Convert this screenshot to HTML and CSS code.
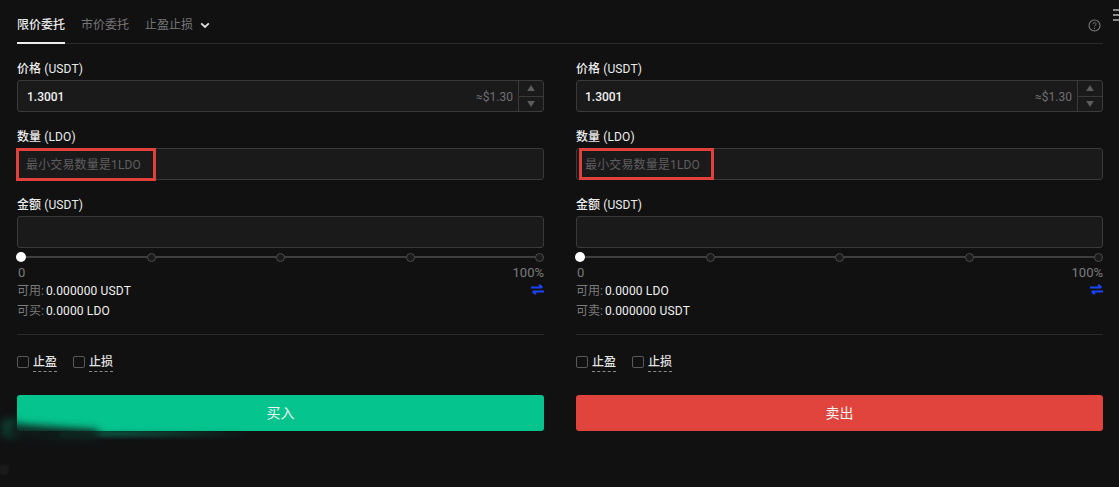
FILE: index.html
```html
<!DOCTYPE html>
<html lang="zh">
<head>
<meta charset="utf-8">
<title>限价委托</title>
<link rel="stylesheet" href="styles.css">
</head>
<body>
<main class="panel">
  <nav class="tabs">
    <span class="tab active">限价委托</span>
    <span class="tab">市价委托</span>
    <span class="tab dropdown">止盈止损
      <svg class="chev" width="10" height="7" viewBox="0 0 10 7"><path d="M1.200 1.400 5 5l3.800-3.600" fill="none" stroke="#e0e0e0" stroke-width="1.800"/></svg>
    </span>
    <svg class="help" width="13" height="13" viewBox="0 0 13 13"><circle cx="6.500" cy="6.500" r="5.500" fill="none" stroke="#7a7a7a" stroke-width="1.100"/><path d="M4.900 5.200c0-2.100 3.200-2.100 3.200-.1 0 1.200-1.600 1.200-1.600 2.500" fill="none" stroke="#7a7a7a" stroke-width="1"/><circle cx="6.500" cy="9.400" r=".7" fill="#7a7a7a"/></svg>
  </nav>
  <div class="menu-mark"><i></i><i></i><i></i></div>
  <div class="columns">
    <form class="col">
      <label class="lbl"><b>价格</b> (USDT)</label>
      <div class="field price">
        <span class="val">1.3001</span>
        <span class="approx">≈$1.30</span>
        <div class="stepper">
          <span class="step"><svg width="8" height="6" viewBox="0 0 9 7"><path d="M4.500 0 9 7H0z" fill="#5c5c5c"/></svg></span>
          <span class="step"><svg width="8" height="6" viewBox="0 0 9 7"><path d="M4.500 7 9 0H0z" fill="#5c5c5c"/></svg></span>
        </div>
      </div>
      <label class="lbl"><b>数量</b> (LDO)</label>
      <div class="field"><span class="ph">最小交易数量是1LDO</span><span class="mark mark-l"></span></div>
      <label class="lbl"><b>金额</b> (USDT)</label>
      <div class="field"></div>
      <div class="slider"><b class="knob"></b><b class="dot"></b><b class="dot"></b><b class="dot"></b><b class="dot"></b></div>
      <div class="range"><span>0</span><span>100%</span></div>
      <div class="info"><span><em>可用:</em>0.000000 USDT</span>
        <svg class="swap" width="13" height="11" viewBox="0 0 13 11"><path d="M0 3.500h11M8 .8l3.500 2.700M13 7.500H2M5 10.200 1.500 7.500" fill="none" stroke="#1a44ff" stroke-width="1.800"/></svg>
      </div>
      <div class="info second"><span><em>可买:</em>0.0000 LDO</span></div>
      <hr class="rule">
      <div class="checks">
        <span class="check"><i class="box"></i><u>止盈</u></span>
        <span class="check"><i class="box"></i><u>止损</u></span>
      </div>
      <button type="button" class="btn buy">买入</button>
    </form>
    <form class="col">
      <label class="lbl"><b>价格</b> (USDT)</label>
      <div class="field price">
        <span class="val">1.3001</span>
        <span class="approx">≈$1.30</span>
        <div class="stepper">
          <span class="step"><svg width="8" height="6" viewBox="0 0 9 7"><path d="M4.500 0 9 7H0z" fill="#5c5c5c"/></svg></span>
          <span class="step"><svg width="8" height="6" viewBox="0 0 9 7"><path d="M4.500 7 9 0H0z" fill="#5c5c5c"/></svg></span>
        </div>
      </div>
      <label class="lbl"><b>数量</b> (LDO)</label>
      <div class="field"><span class="ph">最小交易数量是1LDO</span><span class="mark mark-r"></span></div>
      <label class="lbl"><b>金额</b> (USDT)</label>
      <div class="field"></div>
      <div class="slider"><b class="knob"></b><b class="dot"></b><b class="dot"></b><b class="dot"></b><b class="dot"></b></div>
      <div class="range"><span>0</span><span>100%</span></div>
      <div class="info"><span><em>可用:</em>0.0000 LDO</span>
        <svg class="swap" width="13" height="11" viewBox="0 0 13 11"><path d="M0 3.500h11M8 .8l3.500 2.700M13 7.500H2M5 10.200 1.500 7.500" fill="none" stroke="#1a44ff" stroke-width="1.800"/></svg>
      </div>
      <div class="info second"><span><em>可卖:</em>0.000000 USDT</span></div>
      <hr class="rule">
      <div class="checks">
        <span class="check"><i class="box"></i><u>止盈</u></span>
        <span class="check"><i class="box"></i><u>止损</u></span>
      </div>
      <button type="button" class="btn sell">卖出</button>
    </form>
  </div>
  <div class="glow"></div>
  <div class="glow-side"></div>
  <div class="smear"></div>
  <div class="scrap"></div>
</main>
</body>
</html>
```
FILE: styles.css
```css
* { box-sizing: border-box; }
html, body { margin: 0; height: 100%; }
body {
  background: #111112;
  color: #e6e6e6;
  font: 12px/16px Roboto, "Noto Sans CJK SC", sans-serif;
  overflow: hidden;
}
.panel { position: relative; height: 487px; padding: 0 16px 0 17px; overflow: hidden; }
.tabs {
  display: flex;
  align-items: center;
  gap: 16px;
  height: 44px;
  padding-top: 7px;
  border-bottom: 1px solid #2b2b2c;
}
.tab { color: #777; height: 37px; line-height: 37px; }
.tab.active { color: #e8e8e8; font-weight: 500; border-bottom: 2px solid #eee; margin-bottom: -1px; }
.dropdown { display: flex; align-items: center; gap: 7px; }
.help { margin-left: auto; margin-top: 1px; margin-right: 2px; }
.menu-mark {
  position: absolute; right: 0; top: 9px; width: 6px;
  display: flex; flex-direction: column; gap: 3px;
}
.menu-mark i { display: block; height: 2px; background: #8a8a8a; }
.columns {
  display: grid;
  grid-template-columns: 527px 527px;
  gap: 32px;
  padding-top: 17px;
}
.col { display: flex; flex-direction: column; }
.lbl { height: 19px; line-height: 16px; color: #ececec; letter-spacing: .1px; }
.lbl b { font-weight: 500; }
.field {
  position: relative;
  display: flex;
  align-items: center;
  height: 32px;
  margin-bottom: 17px;
  padding-left: 9px;
  background: #1a1a1b;
  border: 1px solid #3a3a3b;
  border-radius: 3px;
}
.col + .col .field { padding-left: 8px; }
.val { color: #f0f0f0; font-weight: 500; padding-top: 2px; }
.approx { margin-left: auto; margin-right: 5px; padding-top: 2px; color: #6f6f6f; }
.ph { color: #5f5f5f; padding-top: 2px; margin-left: -1px; letter-spacing: .15px; }
.col + .col .ph { margin-left: 0; }
.stepper {
  display: flex; flex-direction: column;
  width: 25px; height: 100%;
  border-left: 1px solid #3a3a3b;
}
.step { flex: 1; display: flex; align-items: center; justify-content: center; }
.step + .step { border-top: 1px solid #3a3a3b; }
.mark {
  position: absolute;
  top: -1px;
  height: 33px;
  border: 3px solid #e2403a;
}
.mark-l { left: -2px; width: 140px; }
.mark-r { left: 2px; width: 135px; height: 32px; }
.slider {
  position: relative;
  display: flex;
  justify-content: space-between;
  align-items: center;
  height: 10px;
  margin-top: -13px;
}
.slider::before {
  content: "";
  position: absolute;
  left: 0; right: 0; top: 4px;
  height: 2px;
  background: #3e3e3f;
}
.knob, .dot { position: relative; display: block; border-radius: 50%; }
.knob { width: 10px; height: 10px; background: #fff; margin-left: -1px; }
.dot { width: 9px; height: 9px; background: #1a1a1b; border: 1.5px solid #4c4c4d; }
.range {
  display: flex;
  justify-content: space-between;
  margin-top: 3px;
  padding-left: 1px;
  color: #7b7b7b;
  font-size: 13px;
  height: 15px;
  line-height: 16px;
}
.info {
  display: flex;
  justify-content: space-between;
  align-items: center;
  height: 20px;
  margin-top: 1px;
  color: #f0f0f0;
  letter-spacing: .15px;
}
.info.second { margin-top: 0; }
.info em { font-style: normal; margin-right: 2px; color: #7b7b7b; letter-spacing: 0; }
.swap { margin-top: -3px; }
.rule {
  width: 100%;
  margin: 13px 0 0;
  border: 0;
  border-top: 1px solid #2b2b2c;
}
.checks { display: flex; gap: 16px; padding-top: 19px; height: 60px; }
.check { display: flex; gap: 4px; height: 18px; align-items: flex-start; }
.box { display: block; width: 12px; height: 12px; margin-top: 2px; border: 1px solid #5a5a5b; border-radius: 2px; }
.check u {
  color: #e4e4e4;
  font-weight: 500;
  text-decoration: none;
  border-bottom: 1px dashed #8a8a8a;
  height: 18px;
}
.btn {
  height: 36px;
  border: 0;
  border-radius: 3px;
  color: #f4f4f4;
  font: inherit;
  font-size: 14px;
}
.buy { background: #05c48e; }
.sell { background: #e1433d; }
.glow {
  position: absolute;
  left: 60px; top: 430px;
  width: 190px; height: 7px;
  background: linear-gradient(90deg, rgba(5,150,110,.6), rgba(5,150,110,.35) 50%, rgba(5,150,110,0));
  filter: blur(2px);
}
.glow-side {
  position: absolute;
  left: 3px; top: 420px;
  width: 14px; height: 16px;
  background: rgba(5,130,95,.55);
  filter: blur(4px);
}
.smear {
  position: absolute;
  left: 8px; top: 427px;
  width: 90px; height: 12px;
  background: #0e1c19;
  filter: blur(4px);
  transform: rotate(4deg);
}
.scrap {
  position: absolute;
  left: 0; top: 465px;
  width: 8px; height: 10px;
  background: rgba(90,90,90,.15);
  filter: blur(1px);
}
```
